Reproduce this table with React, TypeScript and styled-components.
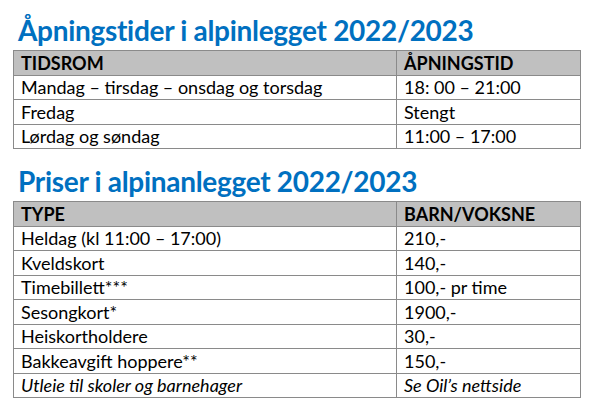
import React from 'react'
import styled, { createGlobalStyle } from 'styled-components'

const GlobalStyle = createGlobalStyle`
  body {
    margin: 0;
    background: #ffffff;
    font-family: Lato, 'Open Sans', sans-serif;
  }
`

const Page = styled.div`
  width: 600px;
  height: 411px;
  padding: 4px 19px 0 13px;
  box-sizing: border-box;
  overflow: hidden;
`

const Title = styled.h1<{ $top: number }>`
  margin: ${(p) => p.$top}px 0 0 5px;
  font-size: 28px;
  line-height: 32px;
  font-weight: 700;
  color: #0070c0;
  letter-spacing: -0.3px;
`

const Table = styled.table`
  width: 568px;
  border-collapse: collapse;
  margin-top: 4px;
  border: 1.5px solid #8a8a8a;
`

const Row = styled.tr`
  height: 24.5px;
`

const HeadCell = styled.th`
  background: #c0c0c0;
  text-align: left;
  font-weight: 700;
  font-size: 18px;
  color: #000;
  padding: 0 7px;
  border: 1.5px solid #8a8a8a;
  &:first-child {
    width: 368px;
  }
`

const Cell = styled.td<{ $italic?: boolean }>`
  font-size: 18px;
  color: #000;
  padding: 0 7px;
  border: 1.5px solid #8a8a8a;
  font-style: ${(p) => (p.$italic ? 'italic' : 'normal')};
  white-space: nowrap;
`

interface SectionProps {
  title: string
  top: number
  head: [string, string]
  rows: [string, string][]
  italicLast?: boolean
}

const Section: React.FC<SectionProps> = ({ title, top, head, rows, italicLast }) => (
  <>
    <Title $top={top}>{title}</Title>
    <Table>
      <thead>
        <Row>
          <HeadCell>{head[0]}</HeadCell>
          <HeadCell>{head[1]}</HeadCell>
        </Row>
      </thead>
      <tbody>
        {rows.map(([a, b], i) => {
          const it = !!italicLast && i === rows.length - 1
          return (
            <Row key={a}>
              <Cell $italic={it}>{a}</Cell>
              <Cell $italic={it}>{b}</Cell>
            </Row>
          )
        })}
      </tbody>
    </Table>
  </>
)

const openingRows: [string, string][] = [
  ['Mandag – tirsdag – onsdag og torsdag', '18: 00 – 21:00'],
  ['Fredag', 'Stengt'],
  ['Lørdag og søndag', '11:00 – 17:00'],
]

const priceRows: [string, string][] = [
  ['Heldag (kl 11:00 – 17:00)', '210,-'],
  ['Kveldskort', '140,-'],
  ['Timebillett***', '100,- pr time'],
  ['Sesongkort*', '1900,-'],
  ['Heiskortholdere', '30,-'],
  ['Bakkeavgift hoppere**', '150,-'],
  ['Utleie til skoler og barnehager', 'Se Oil’s nettside'],
]

export default function App() {
  return (
    <>
      <GlobalStyle />
      <Page>
        <Section
          title="Åpningstider i alpinlegget 2022/2023"
          top={10}
          head={['TIDSROM', 'ÅPNINGSTID']}
          rows={openingRows}
        />
        <Section
          title="Priser i alpinanlegget 2022/2023"
          top={16}
          head={['TYPE', 'BARN/VOKSNE']}
          rows={priceRows}
          italicLast
        />
      </Page>
    </>
  )
}
